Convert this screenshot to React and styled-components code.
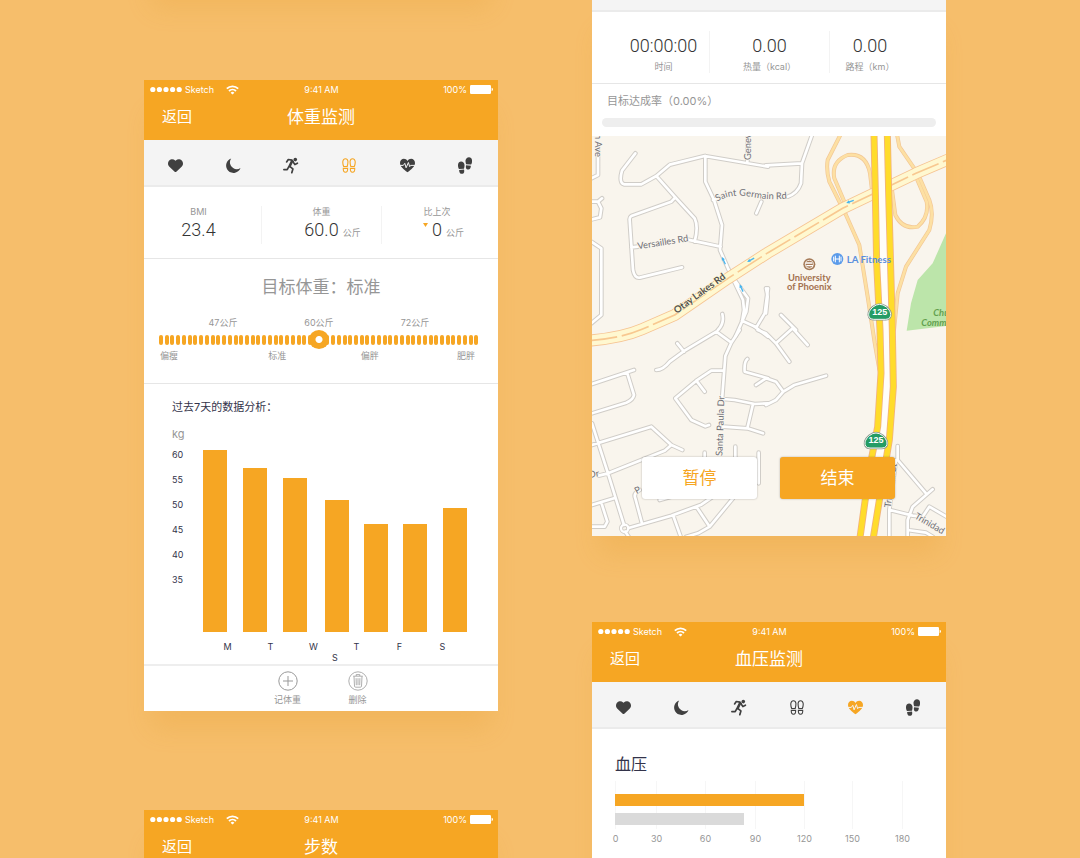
import React from "react";
import styled, { createGlobalStyle } from "styled-components";
import { FaHeart } from "react-icons/fa6";

const ORANGE = "#f6a623";
const GREY = "#969696";
const INK = "#33334a";

const GlobalStyle = createGlobalStyle`
  *, *::before, *::after { box-sizing: border-box; }
  body {
    margin: 0;
    background: #f6be6b;
    font-family: Inter, "Noto Sans CJK SC", sans-serif;
    font-size: 9px;
    color: ${INK};
  }
  button { font: inherit; color: inherit; background: none; border: 0; padding: 0; cursor: pointer; }
  h1, h2, h3, p, dl, dt, dd { margin: 0; font-weight: 400; }
  svg { display: block; }
`;

const Page = styled.main`
  display: grid;
  grid-template-columns: 1fr 1fr;
  align-items: start;
  gap: 94px;
  height: 100vh;
  padding: 0 134px 0 144px;
  overflow: hidden;
`;

const Column = styled.div`
  display: flex;
  flex-direction: column;
`;

const Card = styled.article`
  background: #fff;
  box-shadow: 0 25px 24px -8px rgba(225, 150, 36, 0.2);
  margin-top: ${(p) => p.$gap || 0}px;
  min-height: ${(p) => p.$min || 0}px;
`;

const EarlierCard = styled(Card)`
  height: 100px;
  margin-top: -110px;
`;

/* ---------- header ---------- */

const Header = styled.header`
  height: 60px;
  background: ${ORANGE};
  color: #fff;
`;

const StatusBar = styled.div`
  display: grid;
  grid-template-columns: 1fr auto 1fr;
  align-items: center;
  height: 19px;
  padding: 0 5px 0 6px;
  line-height: 12px;
`;

const StatusSide = styled.div`
  display: flex;
  align-items: center;
  justify-content: ${(p) => (p.$end ? "flex-end" : "flex-start")};
  gap: 3px;
  svg + span + svg { margin-left: 9px; }
`;

const NavBar = styled.div`
  display: grid;
  grid-template-columns: 1fr auto 1fr;
  align-items: center;
  height: 36px;
  padding: 0 18px;
`;

const BackButton = styled.button`
  justify-self: start;
  font-size: 15px;
  line-height: 24px;
`;

const Title = styled.h1`
  && { font-size: 17px; line-height: 24px; }
`;

const Signal = () => (
  <svg width="32" height="7" viewBox="0 0 32 7" fill="#fff" aria-hidden="true">
    {[2.8, 9.4, 16, 22.6, 29.2].map((x) => (
      <circle key={x} cx={x} cy="3.5" r="2.6" />
    ))}
  </svg>
);

const Wifi = () => (
  <svg width="13" height="10" viewBox="0 0 13 10" fill="none" stroke="#fff" strokeWidth="1.8" aria-hidden="true">
    <path d="M.8 3.6a8.2 8.2 0 0 1 11.4 0" />
    <path d="M3 6a5 5 0 0 1 7 0" />
    <path d="M6.5 9.6 4.600 7.700a2.700 2.700 0 0 1 3.800 0Z" fill="#fff" stroke="none" />
  </svg>
);

const Battery = () => (
  <svg width="23" height="9" viewBox="0 0 23 9" fill="#fff" aria-hidden="true">
    <rect width="21" height="9" rx="1.2" />
    <path d="M21.6 2.8q1.4.3 1.4 1.7t-1.4 1.7Z" />
  </svg>
);

function AppHeader({ title }) {
  return (
    <Header>
      <StatusBar>
        <StatusSide>
          <Signal />
          <span>Sketch</span>
          <Wifi />
        </StatusSide>
        <span>9:41 AM</span>
        <StatusSide $end>
          <span>100%</span>
          <Battery />
        </StatusSide>
      </StatusBar>
      <NavBar>
        <BackButton type="button">返回</BackButton>
        <Title>{title}</Title>
      </NavBar>
    </Header>
  );
}

/* ---------- tabs ---------- */

const Tabs = styled.nav`
  display: grid;
  grid-template-columns: repeat(6, 1fr);
  height: 47px;
  padding: 5px 4px 0 2px;
  background: #f4f4f4;
  border-bottom: 2px solid #ebebeb;
`;

const TabStrip = styled.div`
  height: 12px;
  background: #f4f4f4;
  border-bottom: 2px solid #ebebeb;
`;

const Tab = styled.button`
  && { color: ${(p) => (p.$active ? ORANGE : "#404040")}; }
  display: flex;
  align-items: center;
  justify-content: center;
`;

const Moon = () => (
  <svg width="15" height="15" viewBox="0 0 15 15" fill="currentColor">
    <path d="M5.2.5A6.600 6.600 0 0 0 7.100 10 6.900 6.900 0 0 0 14.500 10 7.400 7.400 0 1 1 5.200.5Z" />
  </svg>
);

const Runner = () => (
  <svg
    width="16"
    height="17"
    viewBox="0 0 16 17"
    fill="none"
    stroke="currentColor"
    strokeWidth="1.7"
    strokeLinecap="round"
    strokeLinejoin="round"
  >
    <circle cx="12.300" cy="2.600" r="1.800" fill="currentColor" stroke="none" />
    <path d="M3.600 4.900 5.300 2.500l3.600.7 1.300 1.300" />
    <path d="M9 4.200 6.600 9.200" strokeWidth="2.600" />
    <path d="M10.300 5.300 11.900 7.500l2.500-1.300" />
    <path d="M7 9.600 9.900 11.900 8.800 15.700" />
    <path d="M5.700 9.800 4.200 12.600.9 12.700" />
  </svg>
);

const Soles = () => (
  <svg width="14" height="15" viewBox="0 0 14 15" fill="none" stroke="currentColor" strokeWidth="1.1">
    <path d="M1.700 8.500C.9 6.500.6 4.800.9 3.200 1.200 1.500 2.100.7 3.400.7s2.300.9 2.500 2.600c.1 1.700-.1 3.400-.7 5.200Z" />
    <path d="M12.300 8.500c.8-2 1.100-3.700.8-5.300C12.800 1.500 11.900.7 10.600.7S8.300 1.600 8.100 3.300c-.1 1.700.1 3.400.7 5.200Z" />
    <path d="M1.300 10.400h4.300c.2 2.500-.5 3.900-2.100 3.900-1.700 0-2.400-1.600-2.200-3.900ZM12.700 10.400H8.400c-.2 2.500.5 3.900 2.100 3.900 1.700 0 2.400-1.600 2.200-3.900Z" />
  </svg>
);

const HeartBeat = () => (
  <svg width="15" height="15" viewBox="0 0 15 15" fill="currentColor">
    <path d="M7.500 14.300C3.500 11.200 0 8.600 0 5 0 2.500 1.700.8 3.900.8c1.500 0 2.800.8 3.600 2.100C8.300 1.600 9.600.8 11.100.8 13.300.8 15 2.500 15 5c0 3.600-3.500 6.200-7.500 9.300Z" />
    <path d="M0 7.400h3.300l1.500-2.100 1.300 4.500 2.300-5.300 1.300 4.200.9-1.300H15" fill="none" stroke="#f4f4f4" strokeWidth="1" strokeLinejoin="round" />
  </svg>
);

const Prints = () => (
  <svg width="14" height="17" viewBox="0 0 14 17" fill="currentColor">
    <path d="M.9 11.900C0 10.300-.2 8.700.1 7.200.4 5.500 1.500 4.600 3.100 4.600c1.900 0 3.200 1.300 3.400 3.200.1 1.300-.1 2.500-.5 3.900Z" />
    <path d="m1.100 12.900 4.900-.3c.3 1 .4 1.900.1 2.700-.3 1-1.100 1.500-2.200 1.500-1.700 0-2.700-1.400-2.800-3.900Z" />
    <path d="M13.100 7.600c.9-1.600 1.200-3.200.9-4.700C13.700 1.200 12.600.2 11 .2 9.100.2 7.800 1.600 7.500 3.500c-.1 1.300.2 2.500.6 3.700Z" />
    <path d="m12.900 8.700-4.800-.4c-.3 1-.4 1.900-.1 2.700.3 1 1.200 1.500 2.300 1.500 1.600 0 2.500-1.400 2.600-3.800Z" />
  </svg>
);

const TABS = [
  ["心率", () => <FaHeart size={15} />],
  ["睡眠", Moon],
  ["跑步", Runner],
  ["体重", Soles],
  ["血压", HeartBeat],
  ["步数", Prints],
];

function TabBar({ active }) {
  return (
    <Tabs>
      {TABS.map(([name, Icon]) => (
        <Tab key={name} type="button" aria-label={name} $active={name === active}>
          <Icon />
        </Tab>
      ))}
    </Tabs>
  );
}

/* ---------- statistics row ---------- */

const StatRow = styled.dl`
  display: grid;
  grid-template-columns: 1fr 120px 1fr;
  height: 72px;
  padding: 19px 0 14px;
  border-bottom: 1px solid #e6e6e6;
`;

const Stat = styled.div`
  display: flex;
  flex-direction: ${(p) => (p.$valueFirst ? "column-reverse" : "column")};
  justify-content: ${(p) => (p.$valueFirst ? "flex-end" : "flex-start")};
  align-items: center;
  gap: ${(p) => (p.$valueFirst ? 3 : 0)}px;
  padding: ${(p) => (p.$valueFirst ? "3px" : 0)} ${(p) => p.$right || 0}px 0 ${(p) => p.$left || 0}px;
  & + & { border-left: 1px solid #f3f3f3; }
`;

const StatLabel = styled.dt`
  color: ${GREY};
  line-height: 12px;
`;

const StatValue = styled.dd`
  display: grid;
  grid-template-columns: 1fr auto 1fr;
  align-items: baseline;
  gap: 4px;
  color: #333;
  font-family: Roboto, sans-serif;
  font-size: 18px;
  line-height: 24px;
  && { font-weight: 300; }
`;

const Unit = styled.span`
  grid-column: 3;
  width: 18px;
  color: ${GREY};
  font: 400 9px/12px Inter, "Noto Sans CJK SC", sans-serif;
`;

const Amount = styled.span`
  grid-column: 2;
`;

const Drop = styled.svg`
  align-self: start;
  justify-self: end;
  margin-top: 5px;
`;

/* ---------- target weight ---------- */

const Target = styled.section`
  height: 125px;
  padding: 16px 19px 0 15px;
  border-bottom: 1px solid #e6e6e6;
  color: ${GREY};
`;

const TargetTitle = styled.h2`
  && { font-size: 17px; line-height: 24px; }
  margin-bottom: 18px;
  padding-left: 4px;
  text-align: center;
`;

const MarkRow = styled.div`
  display: flex;
  padding: 0 16px;
  line-height: 12px;
  span { flex: 1; text-align: center; }
`;

const Scale = styled.div`
  display: grid;
  align-items: center;
  height: 21px;
  > * { grid-area: 1 / 1; }
`;

const Ticks = styled.div`
  display: flex;
  justify-content: space-between;
  i { width: 4px; height: 10px; border-radius: 2px; background: ${ORANGE}; }
`;

const Range = styled.input`
  appearance: none;
  width: 100%;
  height: 20px;
  margin: 0;
  background: transparent;
  &::-webkit-slider-thumb {
    appearance: none;
    width: 20px;
    height: 19px;
    border-radius: 50%;
    background: radial-gradient(circle, #fff 3px, ${ORANGE} 4px);
  }
`;

const BandRow = styled.div`
  display: grid;
  grid-template-columns: 108fr 92fr 96fr auto;
  padding: 0 4px 0 1px;
  line-height: 12px;
`;

/* ---------- seven day chart ---------- */

const History = styled.section`
  height: 280px;
  padding: 15px 29px 0 28px;
`;

const HistoryTitle = styled.h2`
  && { font-size: 11px; line-height: 16px; }
`;

const AxisUnit = styled.p`
  margin-top: 12px;
  color: ${GREY};
  font-size: 11px;
  line-height: 14px;
`;

const Plot = styled.div`
  display: grid;
  grid-template-columns: 31px 1fr;
`;

const AxisY = styled.div`
  padding-top: 1px;
  font-size: 9px;
  line-height: 25px;
`;

const PlotBody = styled.div`
  padding: 9px 2px 0 0;
`;

const Days = styled.div`
  display: flex;
  flex-wrap: wrap;
  justify-content: center;
  padding-top: 9px;
  font-size: 9px;
  line-height: 11px;
  span { width: 43px; text-align: center; }
`;

const BARS = [
  [0, 182],
  [40, 164],
  [80, 154],
  [122, 132],
  [161, 108],
  [200, 108],
  [240, 124],
];

const Footer = styled.footer`
  display: flex;
  justify-content: center;
  gap: 31px;
  height: 47px;
  padding: 5px 0 0 3px;
  border-top: 2px solid #eee;
`;

const FooterButton = styled.button`
  && { color: ${GREY}; }
  display: flex;
  flex-direction: column;
  align-items: center;
  width: 39px;
  gap: 3px;
  line-height: 12px;
`;

const AddIcon = () => (
  <svg width="20" height="20" viewBox="0 0 20 20" fill="none" stroke="#999" strokeWidth="1">
    <circle cx="10" cy="10" r="9.200" />
    <path d="M10 5v10M5 10h10" />
  </svg>
);

const TrashIcon = () => (
  <svg width="20" height="20" viewBox="0 0 20 20" fill="none" stroke="#999" strokeWidth=".8">
    <circle cx="10" cy="10" r="9.200" />
    <path d="M5.200 5.200h9.600M8.200 5V3.600h3.600V5M6 5.400l.5 9.800q.1 1 1.100 1h4.800q1 0 1.100-1l.5-9.800M8.100 7.200l.2 7M10 7.200v7M11.900 7.200l-.2 7" />
  </svg>
);

/* ---------- map card ---------- */

const Goal = styled.section`
  height: 52px;
  padding: 9px 10px 0;
`;

const GoalLabel = styled.label`
  display: block;
  margin: 0 0 9px 5px;
  color: ${GREY};
  font-size: 11px;
  line-height: 16px;
`;

const Progress = styled.progress`
  appearance: none;
  display: block;
  width: 100%;
  height: 9px;
  border-radius: 5px;
  overflow: hidden;
  &::-webkit-progress-bar { background: #eee; }
  &::-webkit-progress-value { background: ${ORANGE}; }
`;

const MapArea = styled.section`
  display: grid;
  height: 400px;
  > * { grid-area: 1 / 1; }
`;

const MapSvg = styled.svg`
  width: 100%;
  height: 400px;
  background: #f9f5ed;
  font-family: Lato, sans-serif;
`;

const MapActions = styled.div`
  display: flex;
  align-self: end;
  gap: 23px;
  padding: 0 51px 37px 50px;
`;

const ActionButton = styled.button`
  && {
    color: ${(p) => (p.$primary ? "#fff" : ORANGE)};
    background: ${(p) => (p.$primary ? ORANGE : "#fff")};
  }
  flex: 1;
  height: 42px;
  border-radius: 3px;
  box-shadow: 0 0 2px rgba(0, 0, 0, 0.3);
  font-size: 17px;
  line-height: 24px;
`;

/* Streets, grouped by quarter of the map; each group is shifted by its own origin. */
const STREETS = [
  {
    at: "-12 -18",
    d: `M30 60V135L10 145 M12 215H30L42 205 M30 215L40 235L36 262L12 268 M10 335L40 355V555L10 580
      M142 70L102 122Q92 158 108 163H160L205 138L245 104L350 78L540 110
      M205 138L262 202L320 265Q332 290 320 335 M262 202L250 215L130 258Q124 262 125 270L135 420Q140 445 155 443L282 412
      M130 352L150 350 M295 328L398 350 M352 78V155L378 210L402 285L396 360L420 415L465 510L468 540L462 575L443 618
      M440 450L480 505L475 545L462 575 M375 210L392 204 M520 215L505 250 M403 552Q410 580 390 600
      M540 475L530 550L505 592L462 572 M480 18L478 95`,
  },
  {
    at: "522 -18",
    d: `M0 106L108 100L137 18 M108 100L105 160Q95 190 65 200 M0 475L5 500L0 550 M45 555L90 600`,
  },
  {
    at: "-12 582",
    d: `M385 5L290 62L245 95Q225 120 205 120 M268 40L288 65 M385 5L430 38 M455 0L430 38L412 78L402 210
      M478 87Q468 95 470 125L540 145 M408 122H370L325 152L262 205L310 270L352 289L363 285 M325 152L350 185
      M405 207L440 210L500 222L540 220 M495 222L478 295 M405 290L478 295L525 310 M442 350V400 M512 368V460 M350 368V390
      M12 162L138 120 M118 130L138 195Q135 210 115 218L12 250 M12 280L60 430L108 585 M12 345L190 290L250 345L283 360
      M250 345L230 362L60 430L32 437 M78 505L12 525 M40 518L58 575L50 590H12 M155 480Q135 490 142 505L162 580
      M122 594L250 557L340 524L375 500 M255 555L278 620 M325 530L365 590 M295 620L330 610L365 590L435 505 M215 510L260 497
      M112 605L125 625 M500 -10L540 20`,
  },
  {
    at: "522 582",
    d: `M-25 0L0 10L30 40L70 95 M30 40L80 -5L125 45 M-30 165L0 145L30 155L52 185L30 210L0 225 M52 185L85 165L180 137
      M395 348V390L480 490 M500 478L440 530L425 570V620 M390 390L370 540V620 M372 540L440 557L470 560
      M470 560L490 530L545 562 M425 600L480 608L500 620`,
  },
];

const OTAY = "M-10 614Q90 606 150 580L248 537L408 427L528 350L752 217L972 112L1070 70";
const HIGHWAY_SOUTH = "M846 -5L850 172L854 382L864 582L867 712L857 872L832 1002L804 1205";
const HIGHWAY_NORTH = "M886 -5L890 172L897 432L901 582L904 752L892 912L867 1062L844 1205";
const RAMPS =
  "M746 -5L707 72Q702 102 712 137L762 237L802 327L827 482L848 620L862 700 M757 197L727 127Q717 77 767 57Q822 50 834 112L840 162 M915 -5L922 32L977 112L1012 192Q1027 232 1012 282L942 392L917 472L906 582 M972 122L1004 197Q1012 242 977 272Q932 282 910 237L900 162";

const SHIELD_PATH = "M-31 18C-37 6-28-6-20-13Q0-29 20-13C28-6 37 6 31 18Q27 24 18 24H-18Q-27 24-31 18Z";

function Shield({ x, y }) {
  return (
    <g transform={`translate(${x} ${y})`}>
      <path d={SHIELD_PATH} fill="#258c5a" stroke="#8b9a90" strokeWidth="7" />
      <path d={SHIELD_PATH} fill="#249c65" stroke="#f3f7f3" strokeWidth="3" />
      <text y="10" textAnchor="middle" fontSize="27" fontWeight="700" fill="#fff" fontFamily="Liberation Sans, sans-serif">125</text>
    </g>
  );
}

const Arrow = ({ x, y, turn }) => (
  <path
    transform={`translate(${x} ${y}) rotate(${turn})`}
    d="M-12 0L-2-5V-2H12V2H-2V5Z"
    fill="#48b5ee"
  />
);

function CityMap() {
  return (
    <MapSvg viewBox="0 0 1062 1200" preserveAspectRatio="xMidYMid slice" role="img" aria-label="地图">
      <path d="M1062 292L1022 382L977 432L957 502L944 584L1062 570Z" fill="#bce5aa" />
      <g fill="none" strokeLinecap="round" strokeLinejoin="round">
        {STREETS.map((s) => (
          <path key={s.at} transform={`translate(${s.at})`} d={s.d} stroke="#d0cdc8" strokeWidth="14" />
        ))}
        <circle cx="98" cy="1177" r="11" stroke="#d0cdc8" strokeWidth="12" />
        {STREETS.map((s) => (
          <path key={s.at} transform={`translate(${s.at})`} d={s.d} stroke="#fff" strokeWidth="8" />
        ))}
        <circle cx="98" cy="1177" r="11" stroke="#fff" strokeWidth="7" />
        <path d={RAMPS} stroke="#f2c795" strokeWidth="12" />
        <path d={RAMPS} stroke="#fde0a3" strokeWidth="8" />
        <path d={OTAY} stroke="#f6c493" strokeWidth="36" />
        <path d={OTAY} stroke="#fff8d0" strokeWidth="31" />
        <path d={OTAY} stroke="#f8c890" strokeWidth="5" strokeDasharray="86 14" strokeLinecap="butt" />
        <path d="M866 -5L870 172L876 432L882 582L886 752L875 892L850 1032L824 1205" stroke="#fffdf8" strokeWidth="24" />
        <path d={`${HIGHWAY_SOUTH} ${HIGHWAY_NORTH}`} stroke="#f1b27d" strokeWidth="21" />
        <path d={`${HIGHWAY_SOUTH} ${HIGHWAY_NORTH}`} stroke="#ffdc2b" strokeWidth="16" />
      </g>
      <Arrow x="395" y="374" turn="65" />
      <Arrow x="448" y="456" turn="65" />
      <Arrow x="476" y="372" turn="-28" />
      <Arrow x="774" y="197" turn="-20" />

      <g fill="#6f6f76" fontSize="28" stroke="#f9f5ed" strokeWidth="5" paintOrder="stroke" strokeLinejoin="round">
        <text transform="translate(8 -6) rotate(90)">n Ave</text>
        <text transform="translate(476 72) rotate(-90)">Genev</text>
        <text transform="translate(138 340) rotate(-9)">Versailles Rd</text>
        <path id="saint-germain" d="M376 197Q420 170 480 183Q550 196 610 184" fill="none" stroke="none" />
        <text><textPath href="#saint-germain">Saint Germain Rd</textPath></text>
        <text transform="translate(391 960) rotate(-88)">Santa Paula Dr</text>
        <text transform="translate(-8 1026) rotate(-10)">Dr</text>
        <text transform="translate(134 1075) rotate(-30)">P</text>
        <text transform="translate(896 1116) rotate(-82)">Trinidad Ct</text>
        <text transform="translate(966 1146) rotate(30)">Trinidad</text>
      </g>
      <text
        transform="translate(254 534) rotate(-36)"
        fill="#55524e"
        fontSize="29"
        fontWeight="700"
        stroke="#fff8d8"
        strokeWidth="4"
        paintOrder="stroke"
        strokeLinejoin="round"
      >
        Otay Lakes Rd
      </text>

      <circle cx="652" cy="385" r="18" fill="#a57a58" />
      <circle cx="652" cy="385" r="12" fill="none" stroke="#f4ece4" strokeWidth="3" />
      <path d="M641 381h20M643 389h20" stroke="#fff" strokeWidth="4" />
      <g fill="#a3714f" fontSize="28" fontWeight="700" textAnchor="middle">
        <text x="652" y="434">University</text>
        <text x="652" y="463">of Phoenix</text>
      </g>

      <circle cx="736" cy="369" r="18" fill="#5b9bea" />
      <path d="M725 362v14M730 359v20M742 359v20M747 362v14M728 369h16" stroke="#fff" strokeWidth="3" />
      <text x="764" y="380" fontSize="29" fontWeight="700" fill="#5a8fdd">LA Fitness</text>

      <g fill="#63a04f" fontSize="28" fontWeight="700" fontStyle="italic">
        <text x="1024" y="540">Chula</text>
        <text x="988" y="570">Community</text>
      </g>

      <Shield x="863" y="526" />
      <Shield x="852" y="912" />
    </MapSvg>
  );
}

/* ---------- blood pressure ---------- */

const Pressure = styled.section`
  padding: 23px;
`;

const PressureTitle = styled.h2`
  && { font-size: 16px; line-height: 24px; }
  margin-bottom: 1px;
`;

const PressureChart = styled.svg`
  width: 308px;
  height: 70px;
  overflow: visible;
`;

const GRID = [
  [0, 0],
  [41, 30],
  [90, 60],
  [140, 90],
  [189, 120],
  [237, 150],
  [287, 180],
];

export default function App() {
  return (
    <>
      <GlobalStyle />
      <Page>
        <Column>
          <EarlierCard as="div" />

          <Card $gap={90}>
            <AppHeader title="体重监测" />
            <TabBar active="体重" />
            <StatRow>
              <Stat $right={8}>
                <StatLabel>BMI</StatLabel>
                <StatValue>
                  <Amount>23.4</Amount>
                </StatValue>
              </Stat>
              <Stat>
                <StatLabel>体重</StatLabel>
                <StatValue>
                  <Amount>60.0</Amount>
                  <Unit>公斤</Unit>
                </StatValue>
              </Stat>
              <Stat $right={6}>
                <StatLabel>比上次</StatLabel>
                <StatValue>
                  <Drop width="5" height="4" viewBox="0 0 5 4" fill={ORANGE}>
                    <path d="M0 0h5L2.500 4Z" />
                  </Drop>
                  <Amount>0</Amount>
                  <Unit>公斤</Unit>
                </StatValue>
              </Stat>
            </StatRow>

            <Target>
              <TargetTitle>目标体重：标准</TargetTitle>
              <MarkRow>
                <span>47公斤</span>
                <span>60公斤</span>
                <span>72公斤</span>
              </MarkRow>
              <Scale>
                <Ticks>
                  {Array.from({ length: 56 }, (_, i) => (
                    <i key={i} />
                  ))}
                </Ticks>
                <Range type="range" min="0" max="100" defaultValue="50" aria-label="目标体重" />
              </Scale>
              <BandRow>
                <span>偏瘦</span>
                <span>标准</span>
                <span>偏胖</span>
                <span>肥胖</span>
              </BandRow>
            </Target>

            <History>
              <HistoryTitle>过去7天的数据分析：</HistoryTitle>
              <AxisUnit>kg</AxisUnit>
              <Plot>
                <AxisY>
                  {[60, 55, 50, 45, 40, 35].map((n) => (
                    <div key={n}>{n}</div>
                  ))}
                </AxisY>
                <PlotBody>
                  <svg width="100%" height="182" viewBox="0 0 264 182" preserveAspectRatio="none" fill={ORANGE}>
                    {BARS.map(([x, h]) => (
                      <rect key={x} x={x} y={182 - h} width="24" height={h} />
                    ))}
                  </svg>
                  <Days>
                    {["M", "T", "W", "T", "F", "S", "S"].map((d, i) => (
                      <span key={i}>{d}</span>
                    ))}
                  </Days>
                </PlotBody>
              </Plot>
            </History>

            <Footer>
              <FooterButton type="button">
                <AddIcon />
                记体重
              </FooterButton>
              <FooterButton type="button">
                <TrashIcon />
                删除
              </FooterButton>
            </Footer>
          </Card>

          <Card $gap={99} $min={300}>
            <AppHeader title="步数" />
          </Card>
        </Column>

        <Column>
          <Card>
            <TabStrip />
            <StatRow>
              <Stat $valueFirst $left={26}>
                <StatLabel>时间</StatLabel>
                <StatValue>
                  <Amount>00:00:00</Amount>
                </StatValue>
              </Stat>
              <Stat $valueFirst>
                <StatLabel>热量（kcal）</StatLabel>
                <StatValue>
                  <Amount>0.00</Amount>
                </StatValue>
              </Stat>
              <Stat $valueFirst $right={36}>
                <StatLabel>路程（km）</StatLabel>
                <StatValue>
                  <Amount>0.00</Amount>
                </StatValue>
              </Stat>
            </StatRow>
            <Goal>
              <GoalLabel htmlFor="goal">目标达成率（0.00%）</GoalLabel>
              <Progress id="goal" value="0" max="100" />
            </Goal>
            <MapArea>
              <CityMap />
              <MapActions>
                <ActionButton type="button">暂停</ActionButton>
                <ActionButton type="button" $primary>
                  结束
                </ActionButton>
              </MapActions>
            </MapArea>
          </Card>

          <Card $gap={86} $min={500}>
            <AppHeader title="血压监测" />
            <TabBar active="血压" />
            <Pressure>
              <PressureTitle>血压</PressureTitle>
              <PressureChart viewBox="0 0 308 70" role="img" aria-label="血压">
                {GRID.map(([x, n]) => (
                  <g key={n}>
                    <path d={`M${x + 0.5} 4V52`} stroke="#f6f6f6" />
                    <text x={x + 0.5} y="65" textAnchor="middle" fontSize="9" fill={GREY}>
                      {n}
                    </text>
                  </g>
                ))}
                <rect y="17" width="189" height="12" fill={ORANGE} />
                <rect y="36" width="129" height="12" fill="#dadada" />
              </PressureChart>
            </Pressure>
          </Card>
        </Column>
      </Page>
    </>
  );
}
